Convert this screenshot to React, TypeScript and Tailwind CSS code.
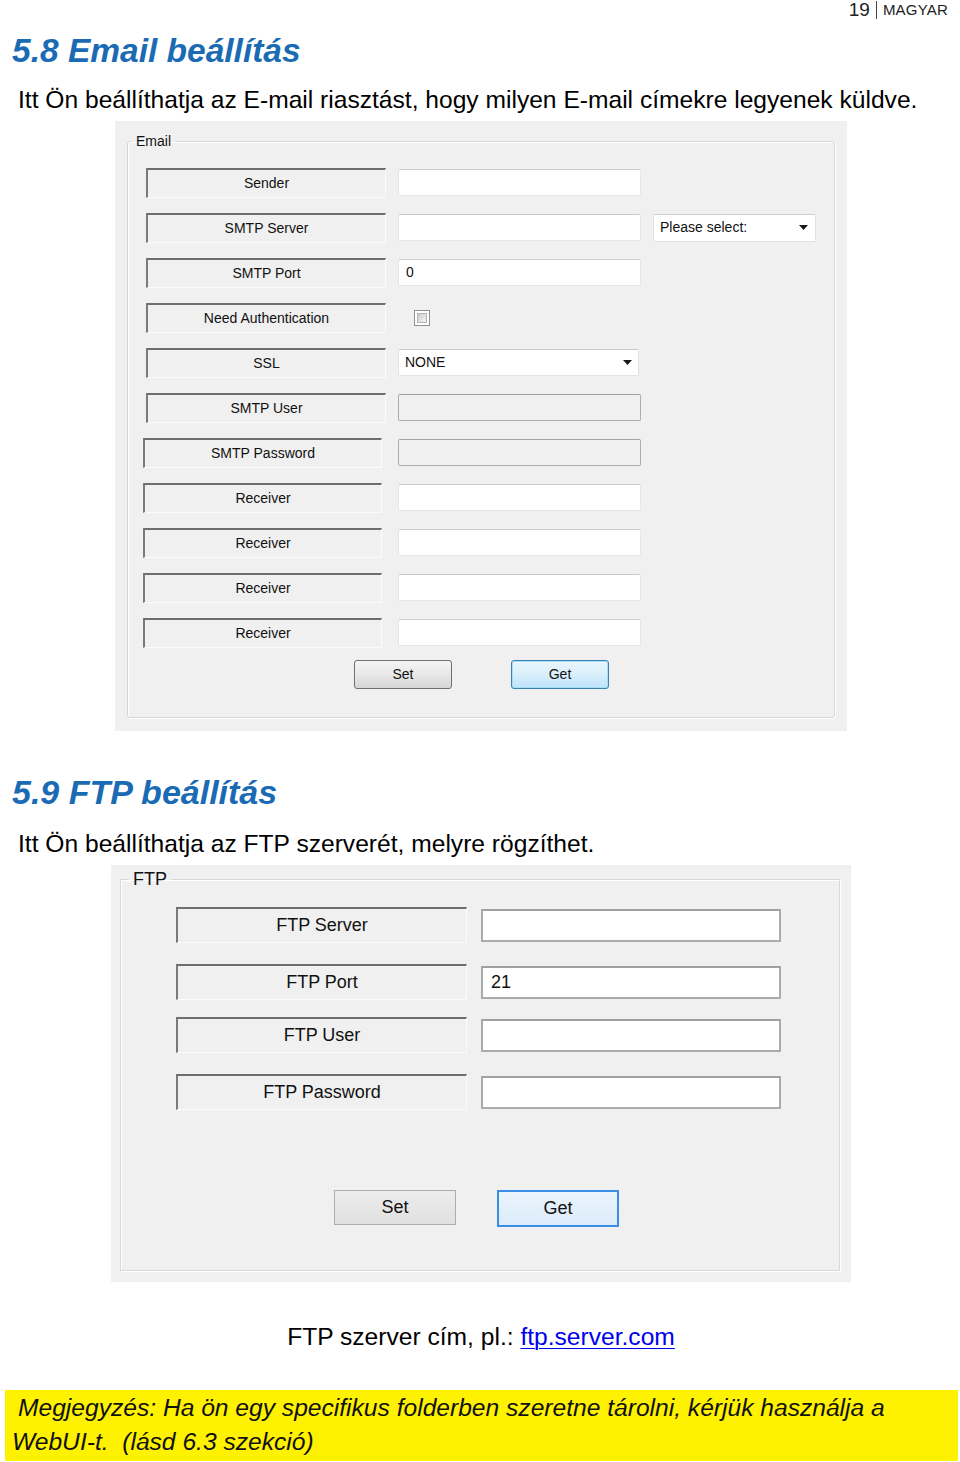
import React from "react"

const doc = "font-['Liberation_Sans',Arial,sans-serif]"
const ui = "font-['Liberation_Sans',Tahoma,sans-serif]"

type EmailRow = {
  label: string
  kind: "text" | "disabled" | "check" | "ssl"
  value?: string
  extra?: boolean
  shifted?: boolean
}

const emailRows: EmailRow[] = [
  { label: "Sender", kind: "text" },
  { label: "SMTP Server", kind: "text", extra: true },
  { label: "SMTP Port", kind: "text", value: "0" },
  { label: "Need Authentication", kind: "check" },
  { label: "SSL", kind: "ssl" },
  { label: "SMTP User", kind: "disabled" },
  { label: "SMTP Password", kind: "disabled", shifted: true },
  { label: "Receiver", kind: "text", shifted: true },
  { label: "Receiver", kind: "text", shifted: true },
  { label: "Receiver", kind: "text", shifted: true },
  { label: "Receiver", kind: "text", shifted: true },
]

const ftpRows = [
  { label: "FTP Server", value: "", gap: "mt-[18px]" },
  { label: "FTP Port", value: "21", gap: "mt-[21px]" },
  { label: "FTP User", value: "", gap: "mt-[17px]" },
  { label: "FTP Password", value: "", gap: "mt-[21px]" },
]

// sunken static label, the way the old win32 dialog draws it
function LabelBox({ children, className }: { children: React.ReactNode; className: string }) {
  return (
    <div
      className={`flex items-center justify-center bg-[#f0f0f0] border-t-2 border-l-2 border-r border-b border-t-[#6e6e6e] border-l-[#7a7a7a] border-r-[#fbfbfb] border-b-[#fbfbfb] text-[#111] ${className}`}
    >
      {children}
    </div>
  )
}

function Arrow() {
  return (
    <svg width="9" height="5" viewBox="0 0 9 5" className="shrink-0">
      <path d="M0 0h9L4.5 5z" fill="#1a1a1a" />
    </svg>
  )
}

function EmailField({ row }: { row: EmailRow }) {
  if (row.kind === "check") {
    return (
      <div className="w-[243px] h-[27px] flex items-center pl-[16px]">
        <div className="w-[16px] h-[16px] border border-[#8e8f8f] bg-white p-[2px]">
          <div className="w-full h-full bg-gradient-to-br from-[#cbcbcb] to-[#f4f4f4] border border-[#b5b5b5]" />
        </div>
      </div>
    )
  }
  if (row.kind === "ssl") {
    return (
      <div className="w-[241px] h-[27px] bg-white border border-[#e2e2e2] border-t-[#c9c9c9] rounded-[2px] flex items-center justify-between pl-[6px] pr-[6px]">
        <span>NONE</span>
        <Arrow />
      </div>
    )
  }
  const disabled = row.kind === "disabled"
  return (
    <div
      className={`w-[243px] h-[27px] rounded-[2px] flex items-center pl-[7px] ${
        disabled
          ? "bg-[#f0f0f0] border border-[#adadad] border-t-[#a3a3a3]"
          : "bg-white border border-[#e6e6e6] border-t-[#cbcbcb]"
      }`}
    >
      {row.value}
    </div>
  )
}

function EmailPanel() {
  return (
    <div className={`ml-[115px] mt-[7px] w-[732px] h-[610px] bg-[#f0f0f0] px-[12px] pt-[12px] ${ui} text-[14px] text-[#111]`}>
      <fieldset className="h-[585px] border border-[#d5d5d5] rounded-[3px] shadow-[inset_1px_1px_0_#ffffff,1px_1px_0_#ffffff]">
        <legend className="ml-[4px] px-[4px] text-[14px] leading-[16px]">Email</legend>
        <div className="px-[15px]">
          <div className="mt-[11px] flex flex-col">
            {emailRows.map((row, i) => (
              <div key={i} className="h-[45px] flex items-center">
                <LabelBox className={row.shifted ? "w-[239px] h-[30px] ml-0 mr-[16px]" : "w-[240px] h-[30px] ml-[3px] mr-[12px]"}>
                  {row.label}
                </LabelBox>
                <EmailField row={row} />
                {row.extra && (
                  <div className="ml-[12px] w-[163px] h-[28px] bg-white border border-[#e2e2e2] border-t-[#cdcdcd] rounded-[2px] flex items-center justify-between pl-[6px] pr-[7px]">
                    <span>Please select:</span>
                    <Arrow />
                  </div>
                )}
              </div>
            ))}
          </div>
          <div className="mt-[5px] flex pl-[211px] gap-[59px]">
            <button className="w-[98px] h-[29px] rounded-[3px] border border-[#707070] bg-gradient-to-b from-[#f4f4f4] via-[#e8e8e8] to-[#d6d6d6] text-[14px]">
              Set
            </button>
            <button className="w-[98px] h-[29px] rounded-[3px] border border-[#3c7fb1] bg-gradient-to-b from-[#eaf6fd] via-[#d9effc] to-[#bde4f9] shadow-[inset_0_0_0_1px_#a6dcf7] text-[14px]">
              Get
            </button>
          </div>
        </div>
      </fieldset>
    </div>
  )
}

function FtpPanel() {
  return (
    <div className={`ml-[111px] mt-[7px] w-[740px] h-[417px] bg-[#f0f0f0] pl-[9px] pr-[11px] pt-[4px] ${ui} text-[18px] text-[#111]`}>
      <fieldset className="h-[402px] border border-[#d8d8d8] shadow-[inset_1px_1px_0_#ffffff,1px_1px_0_#ffffff]">
        <legend className="ml-[8px] px-[4px] text-[18px] leading-[20px]">FTP</legend>
        <div className="pl-[55px]">
          <div className="flex flex-col">
            {ftpRows.map((row) => (
              <div key={row.label} className={`flex items-center ${row.gap}`}>
                <LabelBox className="w-[291px] h-[36px] mr-[14px]">{row.label}</LabelBox>
                <div className="w-[300px] h-[33px] bg-white border-2 border-[#ababab] border-t-[#a0a0a0] flex items-center pl-[8px]">
                  {row.value}
                </div>
              </div>
            ))}
          </div>
          <div className="mt-[80px] flex pl-[158px] gap-[41px]">
            <button className="w-[122px] h-[35px] border border-[#adadad] bg-[#e1e1e1] bg-gradient-to-b from-[#ececec] to-[#e0e0e0] text-[18px]">
              Set
            </button>
            <button className="w-[122px] h-[37px] border-2 border-[#3a8ee6] bg-gradient-to-b from-[#eaf4fc] to-[#dcecfa] text-[18px]">
              Get
            </button>
          </div>
        </div>
      </fieldset>
    </div>
  )
}

export default function App() {
  return (
    <div className={`w-[960px] min-h-[1462px] bg-white ${doc} text-black`}>
      <div className="flex justify-end items-center pr-[12px] h-[20px] text-[#222]">
        <span className="text-[19px] leading-[20px]">19</span>
        <span className="mx-[6px] w-px h-[18px] bg-[#444]" />
        <span className="text-[15px] leading-[20px] tracking-[0.2px]">MAGYAR</span>
      </div>

      <h2 className="ml-[12px] mt-[11px] text-[33.5px] leading-[40px] font-bold italic text-[#1a6bb4]">5.8 Email beállítás</h2>
      <p className="ml-[18px] mt-[15px] text-[24.6px] leading-[28px]">
        Itt Ön beállíthatja az E-mail riasztást, hogy milyen E-mail címekre legyenek küldve.
      </p>

      <EmailPanel />

      <h2 className="ml-[12px] mt-[41px] text-[34px] leading-[40px] font-bold italic text-[#1a6bb4]">5.9 FTP beállítás</h2>
      <p className="ml-[18px] mt-[18px] text-[24.6px] leading-[28px]">Itt Ön beállíthatja az FTP szerverét, melyre rögzíthet.</p>

      <FtpPanel />

      <p className="mt-[40px] text-center pl-[2px] text-[24.6px] leading-[30px]">
        FTP szerver cím, pl.:{" "}
        <a href="#" className="text-[#0000ee] underline underline-offset-[3px] decoration-1">
          ftp.server.com
        </a>
      </p>

      <div className="ml-[5px] w-[953px] mt-[38px] bg-[#fff200] pt-[1px] pb-[2px] text-[24.6px] leading-[34px] italic text-[#111]">
        <p className="pl-[13px]">Megjegyzés: Ha ön egy specifikus folderben szeretne tárolni, kérjük használja a</p>
        <p className="pl-[7px] whitespace-pre">WebUI-t.  (lásd 6.3 szekció)</p>
      </div>
    </div>
  )
}
